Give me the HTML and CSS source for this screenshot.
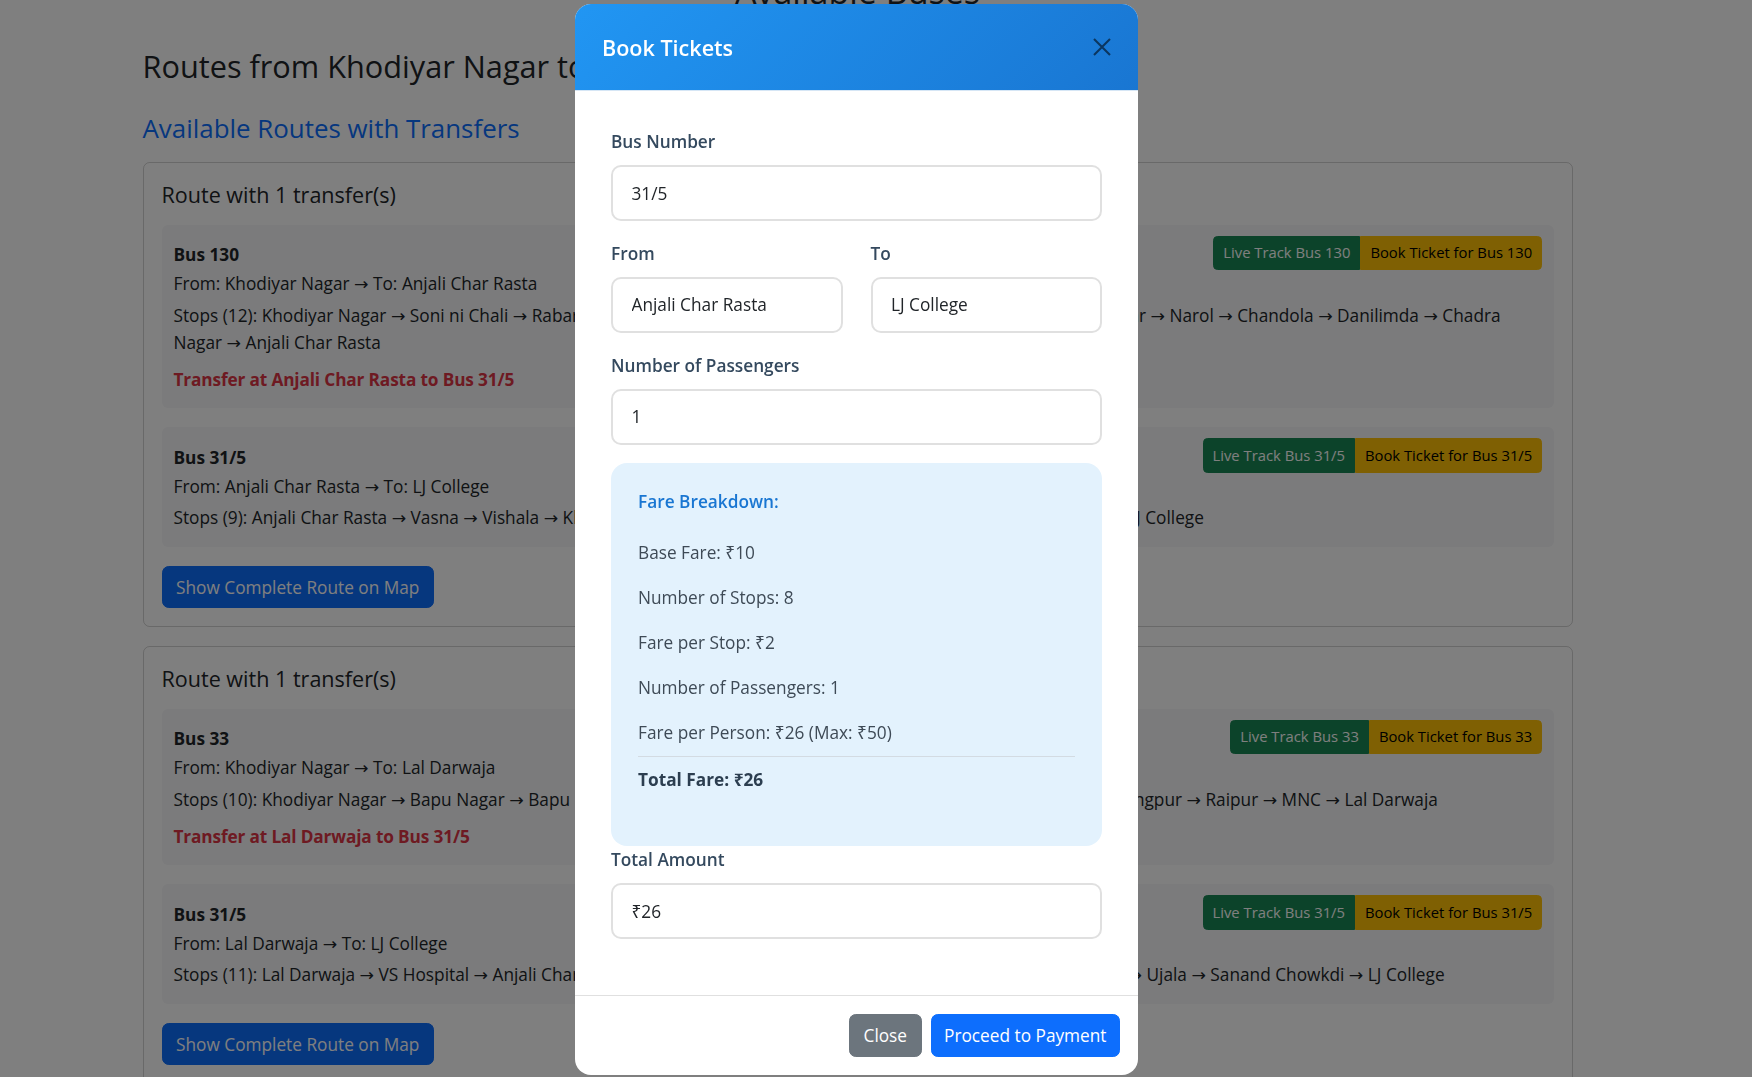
FILE: index.html
```html
<!DOCTYPE html>
<html lang="en">
<head>
<meta charset="utf-8">
<title>Available Buses</title>
<link rel="stylesheet" href="styles.css">
</head>
<body>
<main class="page">
  <h2 class="page-title">Available Buses</h2>
  <h2 class="routes-title">Routes from Khodiyar Nagar to LJ College</h2>
  <h4 class="section-title">Available Routes with Transfers</h4>

  <section class="route-card">
    <h5 class="route-title">Route with 1 transfer(s)</h5>
    <div class="leg">
      <div class="leg-head">
        <strong class="leg-bus">Bus 130</strong>
        <div class="btn-group">
          <button class="btn-sm btn-track">Live Track Bus 130</button>
          <button class="btn-sm btn-book">Book Ticket for Bus 130</button>
        </div>
      </div>
      <p>From: Khodiyar Nagar → To: Anjali Char Rasta</p>
      <p>Stops (12): Khodiyar Nagar → Soni ni Chali → Rabari Colony → CTM Char Rasta → Jashodanagar → Isanpur Vas → Ghodasar → Narol → Chandola → Danilimda → Chadra Nagar → Anjali Char Rasta</p>
      <p class="transfer">Transfer at Anjali Char Rasta to Bus 31/5</p>
    </div>
    <div class="leg">
      <div class="leg-head">
        <strong class="leg-bus">Bus 31/5</strong>
        <div class="btn-group">
          <button class="btn-sm btn-track">Live Track Bus 31/5</button>
          <button class="btn-sm btn-book">Book Ticket for Bus 31/5</button>
        </div>
      </div>
      <p>From: Anjali Char Rasta → To: LJ College</p>
      <p>Stops (9): Anjali Char Rasta → Vasna → Vishala → Khanpur Darwaja → Juhapura → Sarkhej → Ujala → Sanand Chowkdi → LJ College</p>
    </div>
    <button class="btn-map">Show Complete Route on Map</button>
  </section>

  <section class="route-card">
    <h5 class="route-title">Route with 1 transfer(s)</h5>
    <div class="leg">
      <div class="leg-head">
        <strong class="leg-bus">Bus 33</strong>
        <div class="btn-group">
          <button class="btn-sm btn-track">Live Track Bus 33</button>
          <button class="btn-sm btn-book">Book Ticket for Bus 33</button>
        </div>
      </div>
      <p>From: Khodiyar Nagar → To: Lal Darwaja</p>
      <p>Stops (10): Khodiyar Nagar → Bapu Nagar → Bapu Nagar Char Rasta → Rakhial Char Rasta → Gomtipur → Kalupur → Sarangpur → Raipur → MNC → Lal Darwaja</p>
      <p class="transfer">Transfer at Lal Darwaja to Bus 31/5</p>
    </div>
    <div class="leg">
      <div class="leg-head">
        <strong class="leg-bus">Bus 31/5</strong>
        <div class="btn-group">
          <button class="btn-sm btn-track">Live Track Bus 31/5</button>
          <button class="btn-sm btn-book">Book Ticket for Bus 31/5</button>
        </div>
      </div>
      <p>From: Lal Darwaja → To: LJ College</p>
      <p>Stops (11): Lal Darwaja → VS Hospital → Anjali Char Rasta → Vasna → Vishala → Khanpur Darwaja → Juhapura → Sarkhej → Ujala → Sanand Chowkdi → LJ College</p>
    </div>
    <button class="btn-map">Show Complete Route on Map</button>
  </section>
</main>

<div class="backdrop"></div>

<div class="modal-layer">
  <div class="modal" role="dialog" aria-labelledby="bookTitle">
    <header class="modal-header">
      <h5 class="modal-title" id="bookTitle">Book Tickets</h5>
      <button class="btn-close" aria-label="Close">
        <svg width="18" height="18" viewBox="0 0 18 18"><path d="M1 1L17 17M17 1L1 17" stroke="#000" stroke-width="2.1" fill="none"/></svg>
      </button>
    </header>
    <div class="modal-body">
      <div class="field">
        <label class="field-label">Bus Number</label>
        <input class="input" type="text" value="31/5" readonly>
      </div>
      <div class="field-row">
        <div class="field">
          <label class="field-label">From</label>
          <input class="input" type="text" value="Anjali Char Rasta" readonly>
        </div>
        <div class="field">
          <label class="field-label">To</label>
          <input class="input" type="text" value="LJ College" readonly>
        </div>
      </div>
      <div class="field">
        <label class="field-label">Number of Passengers</label>
        <input class="input" type="text" value="1" readonly>
      </div>
      <div class="fare-box">
        <h6 class="fare-heading">Fare Breakdown:</h6>
        <div class="fare-lines">
          <p>Base Fare: ₹10</p>
          <p>Number of Stops: 8</p>
          <p>Fare per Stop: ₹2</p>
          <p>Number of Passengers: 1</p>
          <p>Fare per Person: ₹26 (Max: ₹50)</p>
        </div>
        <p class="fare-total">Total Fare: ₹26</p>
      </div>
      <div class="field">
        <label class="field-label">Total Amount</label>
        <input class="input" type="text" value="₹26" readonly>
      </div>
    </div>
    <footer class="modal-footer">
      <button class="btn btn-secondary">Close</button>
      <button class="btn btn-primary">Proceed to Payment</button>
    </footer>
  </div>
</div>
</body>
</html>
```

FILE: styles.css
```css
* {
  box-sizing: border-box;
}

html,
body {
  margin: 0;
  height: 100%;
}

body {
  font-family: "Open Sans", "Noto Sans", "DejaVu Sans", sans-serif;
  font-size: 17.25px;
  line-height: 27px;
  color: #212529;
  background: #fff;
  overflow: hidden;
  padding-right: 37px;
}

.page {
  width: 1430px;
  margin: 0 auto;
}

.page-title {
  margin: -29px 0 0;
  font-size: 34px;
  line-height: 41px;
  font-weight: 400;
  text-align: center;
}

.routes-title {
  margin: 35.6px 0 0;
  font-size: 30.7px;
  line-height: 37px;
  font-weight: 400;
}

.section-title {
  margin: 28.8px 0 0;
  font-size: 25.9px;
  line-height: 31px;
  font-weight: 400;
  color: #0d6efd;
}

.route-card {
  margin-top: 18px;
  border: 1px solid rgba(0, 0, 0, 0.175);
  border-radius: 6.75px;
  padding: 18px;
}

.route-card + .route-card {
  margin-top: 19px;
}

.route-title {
  margin: 0 0 16.3px;
  font-size: 21.55px;
  line-height: 27px;
  font-weight: 500;
}

.leg {
  background: #f6f7f8;
  border-radius: 6px;
  padding: 11px 11.25px 11px 12px;
  margin-bottom: 19px;
}

.leg-head {
  display: flex;
  justify-content: space-between;
  align-items: center;
}

.leg-bus {
  font-weight: 700;
  position: relative;
  top: 1.5px;
}

.leg p {
  margin: 0 0 4.5px;
}

.leg p.transfer {
  margin-top: 10px;
  color: #dc3545;
  font-weight: 700;
  letter-spacing: -0.15px;
}

.btn-group {
  display: flex;
}

.btn-sm {
  font-family: inherit;
  font-size: 14.8px;
  line-height: 23.6px;
  padding: 4.5px 9px;
  border: 1px solid transparent;
  margin: 0;
  cursor: pointer;
}

.btn-track {
  background: #198754;
  border-color: #198754;
  color: #fff;
  border-radius: 4.5px 0 0 4.5px;
}

.btn-book {
  background: #ffc107;
  border-color: #ffc107;
  color: #000;
  border-radius: 0 4.5px 4.5px 0;
}

.btn-map {
  display: block;
  font-family: inherit;
  font-size: 17.25px;
  line-height: 27px;
  padding: 6.75px 13.5px;
  border: 1px solid #0d6efd;
  border-radius: 6.75px;
  background: #0d6efd;
  color: #fff;
}

.backdrop {
  position: fixed;
  inset: 0;
  background: rgba(0, 0, 0, 0.5);
  z-index: 10;
}

.modal-layer {
  position: fixed;
  inset: 0;
  z-index: 20;
  display: flex;
  justify-content: center;
  align-items: flex-start;
  padding: 4px 39px 0 0;
}

.modal {
  width: 563px;
  background: #fff;
  border-radius: 16px;
  overflow: hidden;
}

.modal-header {
  height: 87px;
  padding: 0 27px;
  display: flex;
  align-items: center;
  justify-content: space-between;
  background: linear-gradient(135deg, #2196f3 0%, #1976d2 100%);
  border-bottom: 1px solid #d6e6f5;
}

.modal-title {
  margin: 0;
  font-size: 21.55px;
  line-height: 27px;
  font-weight: 600;
  color: #fff;
}

.btn-close {
  width: 18px;
  height: 18px;
  padding: 0;
  border: 0;
  background: transparent;
  opacity: 0.55;
  display: flex;
}

.modal-body {
  padding: 37px 36px;
}

.field {
  margin-bottom: 18.75px;
}

.field-label {
  display: block;
  margin-bottom: 10px;
  font-weight: 600;
  color: #34495e;
}

.field-row {
  display: grid;
  grid-template-columns: 1fr 1fr;
  column-gap: 28px;
}

.input {
  display: block;
  width: 100%;
  height: 56px;
  padding: 0 18.5px;
  border: 2px solid #e0e0e0;
  border-radius: 10px;
  font-family: inherit;
  font-size: 17.25px;
  line-height: 27px;
  color: #212529;
  background: #fff;
}

.fare-box {
  background: #e3f2fd;
  border-radius: 16px;
  padding: 28px 27px 36px;
  margin-top: -0.5px;
}

.fare-heading {
  margin: 0 0 27px;
  font-size: 17.25px;
  line-height: 21.6px;
  font-weight: 600;
  color: #1976d2;
}

.fare-lines p {
  margin: 0 0 18px;
  color: #3e4a56;
}

.fare-lines p:last-child {
  margin-bottom: 9.5px;
}

.fare-total {
  margin: 0 0 17px;
  padding-top: 9.5px;
  border-top: 1px solid #d3dbe2;
  font-weight: 700;
  color: #2c3e50;
}

.modal-footer {
  border-top: 1px solid #e0e0e0;
  padding: 18px;
  display: flex;
  justify-content: flex-end;
  gap: 9px;
}

.btn {
  font-family: inherit;
  font-size: 17.25px;
  line-height: 27px;
  padding: 6.75px 13.5px;
  border: 1px solid transparent;
  border-radius: 6.75px;
  color: #fff;
  margin: 0;
}

.btn-secondary {
  background: #6c757d;
  border-color: #6c757d;
}

.btn-primary {
  background: #0d6efd;
  border-color: #0d6efd;
  padding: 6.75px 12.5px;
}
```
